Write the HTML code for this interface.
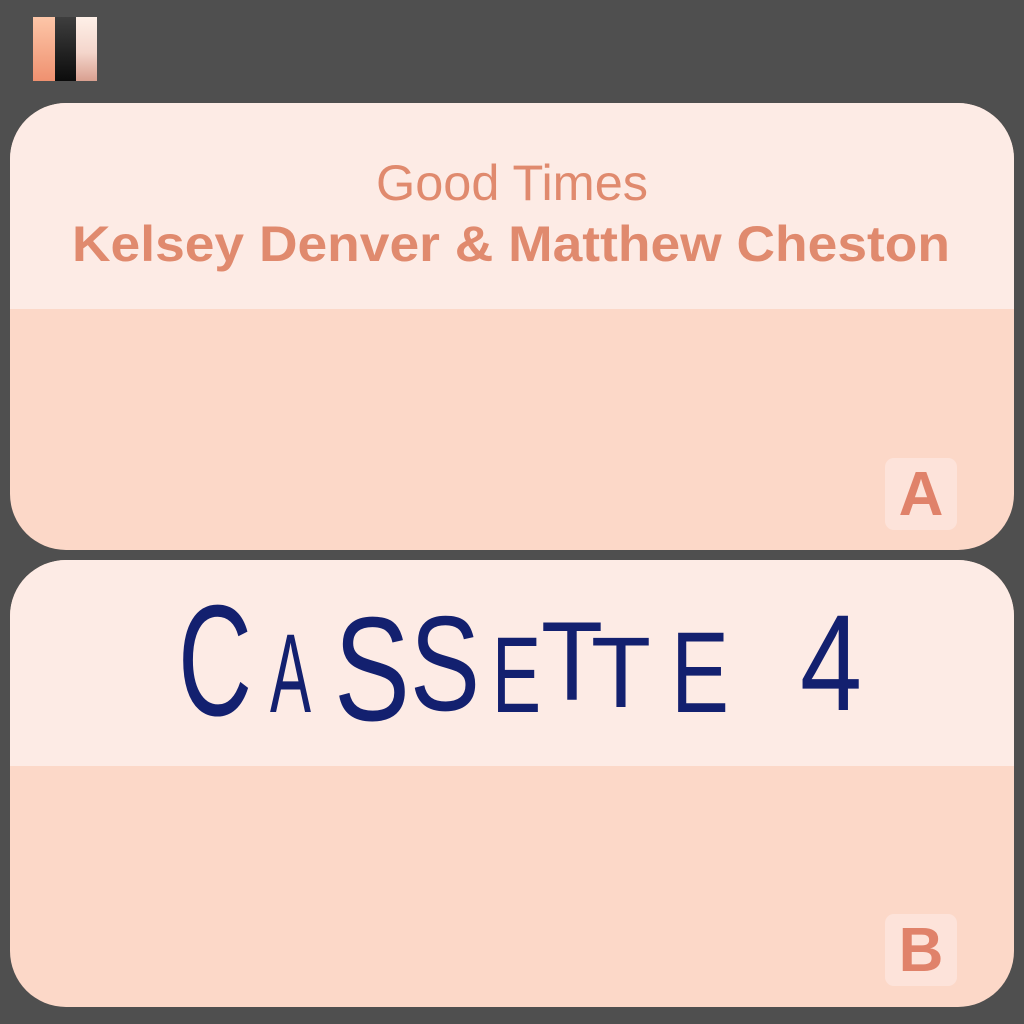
<!DOCTYPE html>
<html><head><meta charset="utf-8"><style>
html,body{margin:0;padding:0;background:#4f4f4f;width:1024px;height:1024px;overflow:hidden}
.card{position:absolute;left:10px;width:1004px;height:447px;border-radius:56px;overflow:hidden;background:#fcd8c8}
.card .top{position:absolute;left:0;top:0;width:100%;height:206px;background:#fdebe5}
.badge{position:absolute;left:875px;width:72px;height:72px;border-radius:9px;background:#fde3da;color:#e0826a;font:bold 62px "Liberation Sans",sans-serif;text-align:center;line-height:74px}
svg{position:absolute;left:0;top:0}
</style></head><body>
<div style="position:absolute;left:33px;top:17px;width:22px;height:64px;background:linear-gradient(#fdc6a8,#ef9170)"></div>
<div style="position:absolute;left:55px;top:17px;width:21px;height:64px;background:linear-gradient(#3e3e3e,#0c0c0c)"></div>
<div style="position:absolute;left:76px;top:17px;width:21px;height:64px;background:linear-gradient(#fef0e8,#f4d6cc 55%,#d9a090)"></div>

<div class="card" style="top:103px"><div class="top"></div><div class="badge" style="top:355px">A</div></div>
<div class="card" style="top:560px"><div class="top"></div><div class="badge" style="top:354px">B</div></div>

<svg width="1024" height="1024" viewBox="0 0 1024 1024">
<g font-family="Liberation Sans, sans-serif" fill="#e08a6e" text-anchor="middle">
<text x="512" y="200" font-size="50" textLength="272" lengthAdjust="spacingAndGlyphs">Good Times</text>
<text x="511" y="261" font-size="50" font-weight="bold" textLength="878" lengthAdjust="spacingAndGlyphs">Kelsey Denver &amp; Matthew Cheston</text>
</g>
<g font-family="Liberation Sans, sans-serif" fill="#13206f">
<text x="178" y="715" font-size="158" textLength="74" lengthAdjust="spacingAndGlyphs">C</text>
<text x="270" y="712" font-size="112" textLength="41" lengthAdjust="spacingAndGlyphs">A</text>
<text x="334" y="720" font-size="148" textLength="76" lengthAdjust="spacingAndGlyphs">S</text>
<text x="410" y="710" font-size="135" textLength="70" lengthAdjust="spacingAndGlyphs">S</text>
<text x="492" y="712" font-size="108" textLength="49" lengthAdjust="spacingAndGlyphs">E</text>
<text x="541" y="700" font-size="112" textLength="62" lengthAdjust="spacingAndGlyphs">T</text>
<text x="591" y="707" font-size="100" textLength="60" lengthAdjust="spacingAndGlyphs">T</text>
<text x="671" y="712" font-size="115" textLength="58" lengthAdjust="spacingAndGlyphs">E</text>
<text x="800" y="710" font-size="137" textLength="62" lengthAdjust="spacingAndGlyphs">4</text>
</g>
</svg>
</body></html>
